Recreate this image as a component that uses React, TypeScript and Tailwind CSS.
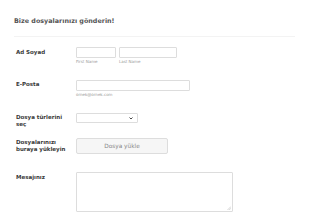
import React from 'react';

function Label({ children, className = '' }: { children: React.ReactNode; className?: string }) {
  return (
    <div className={`mr-[6px] w-[54px] shrink-0 text-[5.5px] leading-[7px] font-bold text-[#3a3a3a] ${className}`}>
      {children}
    </div>
  );
}

function Sub({ children }: { children: React.ReactNode }) {
  return <div className="mt-[1px] text-[4px] leading-[5px] text-[#999]">{children}</div>;
}

export default function App() {
  return (
    <div className="min-h-screen w-[310px] bg-white px-[14px] pt-[16px] font-['DejaVu_Sans',sans-serif]">
      <h1 className="text-[6.4px] font-bold leading-[10px] text-[#555]">Bize dosyalarınızı gönderin!</h1>
      <div className="mr-[1px] mt-[10px] h-px bg-[#f3f3f3]" />

      <div className="pl-[2px]">
        <div className="mt-[10px] flex items-start">
          <Label className="pt-[2px]">Ad Soyad</Label>
          <div className="flex gap-[3px]">
            <div>
              <input className="block h-[11px] w-[40px] rounded-[1px] border border-[#ddd] bg-white outline-none" />
              <Sub>First Name</Sub>
            </div>
            <div>
              <input className="block h-[11px] w-[58px] rounded-[1px] border border-[#ddd] bg-white outline-none" />
              <Sub>Last Name</Sub>
            </div>
          </div>
        </div>

        <div className="mt-[16px] flex items-start">
          <Label className="pt-[1px]">E-Posta</Label>
          <div>
            <input className="block h-[11px] w-[114px] rounded-[1px] border border-[#ddd] bg-white outline-none" />
            <Sub>örnek@örnek.com</Sub>
          </div>
        </div>

        <div className="mt-[16px] flex items-start">
          <Label className="pt-[1px]">Dosya türlerini seç</Label>
          <div className="relative h-[10px] w-[62px] rounded-[1px] border border-[#ddd] bg-white">
            <svg className="absolute right-[4px] top-[3px]" width="4" height="3" viewBox="0 0 4 3">
              <path d="M0.5 0.5 L2 2 L3.5 0.5" fill="none" stroke="#333" strokeWidth="0.9" />
            </svg>
          </div>
        </div>

        <div className="mt-[10px] flex items-start">
          <Label className="pt-[1px]">Dosyalarınızı buraya yükleyin</Label>
          <button className="h-[16px] w-[92px] rounded-[2px] border border-[#ddd] bg-[#f6f6f6] text-[5.8px] text-[#888]">
            Dosya yükle
          </button>
        </div>

        <div className="mt-[18px] flex items-start">
          <Label className="pt-[2px]">Mesajınız</Label>
          <div className="relative">
            <textarea className="block h-[40px] w-[157px] resize-none rounded-[1px] border border-[#ddd] bg-white outline-none" />
            <svg className="absolute bottom-[2px] right-[2px]" width="4" height="4" viewBox="0 0 4 4">
              <path d="M4 0.5 L0.5 4 M4 2.2 L2.2 4" stroke="#bbb" strokeWidth="0.6" />
            </svg>
          </div>
        </div>
      </div>
    </div>
  );
}
